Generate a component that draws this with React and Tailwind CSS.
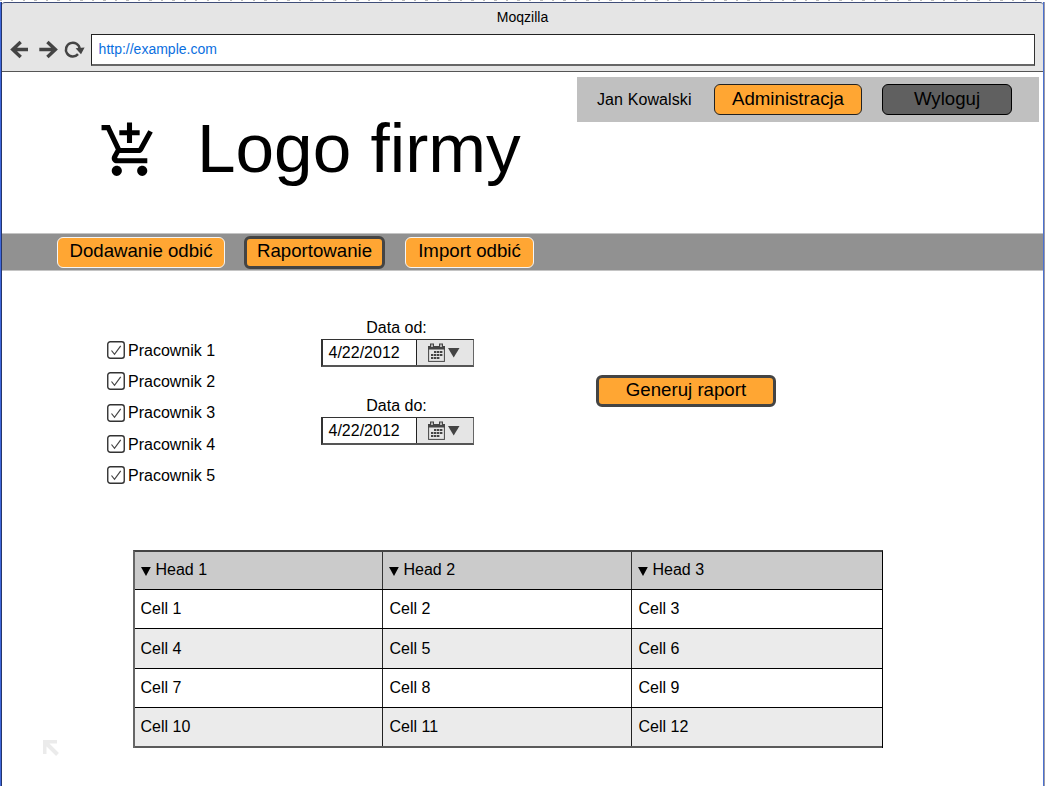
import React from "react";

const ROWS = [
  { cells: ["Cell 1", "Cell 2", "Cell 3"], style: "h-[39px] bg-white border-b border-black" },
  { cells: ["Cell 4", "Cell 5", "Cell 6"], style: "h-[40px] bg-[#ebebeb] border-b border-black" },
  { cells: ["Cell 7", "Cell 8", "Cell 9"], style: "h-[39px] bg-white border-b border-black" },
  { cells: ["Cell 10", "Cell 11", "Cell 12"], style: "h-[40px] bg-[#ebebeb] border-b-2 border-[#5a5a5a]" },
];

const WORKERS = [
  { name: "Pracownik 1", height: "h-[31px]" },
  { name: "Pracownik 2", height: "h-[31px]" },
  { name: "Pracownik 3", height: "h-[32px]" },
  { name: "Pracownik 4", height: "h-[31px]" },
  { name: "Pracownik 5", height: "h-[31px]" },
];

const COLUMNS = "grid grid-cols-[248px_249px_250px]";

function BrowserIcons() {
  return (
    <svg width="78" height="24" viewBox="0 0 78 24" fill="none" stroke="#444" strokeWidth="3.4">
      <path d="M20 11.5H5M12.7 4L4.7 11.5L12.7 19" />
      <path d="M31.3 11.5H47M39.4 4L47.4 11.5L39.4 19" />
      <path d="M70 16.2A6.9 6.9 0 1 1 71.7 11" strokeWidth="2.5" />
      <path d="M67.6 10.3L76.6 9.6L73 16.2Z" fill="#444" stroke="none" />
    </svg>
  );
}

function Browser() {
  return (
    <header className="flex h-[70px] flex-col rounded-t-[3px] border-b border-t border-b-[#555] border-t-[#3e4d78] bg-[#e5e5e5]">
      <div className="flex h-[31px] items-center justify-center text-[14px] leading-none">
        <span className="mt-[-3px]">Moqzilla</span>
      </div>
      <div className="flex items-center pl-[6px]">
        <BrowserIcons />
        <div className="ml-[5px] flex h-[32px] w-[944px] items-center border-2 border-b-[#666] border-l-[#222] border-r-[#333] border-t-[#222] bg-white pl-[6px] text-[14px] leading-none text-[#0b6fe0] [border-width:1px_1px_2px_1px]">
          <span className="ml-[0.6px] mt-[-1px]">http://example.com</span>
        </div>
      </div>
    </header>
  );
}

function Checkbox() {
  return (
    <svg className="mt-[-1px] shrink-0" width="18" height="18" viewBox="0 0 18 18" fill="none">
      <rect x="0.75" y="0.75" width="16.5" height="16.5" rx="2.5" fill="white" stroke="#333" strokeWidth="1.4" />
      <path d="M4.5 9.5L7.5 13.3L13.7 4.8" stroke="#444" strokeWidth="1.2" />
    </svg>
  );
}

function CalendarIcon() {
  return (
    <svg width="34" height="20" viewBox="0 0 34 20">
      <rect x="0.6" y="3.6" width="15.8" height="14.8" fill="none" stroke="#444" strokeWidth="1" />
      <path fill="#444" d="M0 3H2V0.5H6V3H11V0.5H15V3H17V6.5H0Z" />
      <path fill="#e5e5e5" d="M3.3 1.5h1.4v2.5H3.3zM12.3 1.5h1.4v2.5h-1.4z" />
      <path
        fill="#444"
        d="M6 8h2.4v2H6zM9 8h2.4v2H9zM12 8h2.4v2H12zM3 11h2.4v2H3zM6 11h2.4v2H6zM9 11h2.4v2H9zM12 11h2.4v2H12zM3 14h2.4v2H3zM6 14h2.4v2H6zM9 14h2.4v2H9z"
      />
      <path fill="#444" d="M20 5H31.5L25.7 14.5Z" />
    </svg>
  );
}

function DateField({ label }) {
  return (
    <div className="flex w-[153px] flex-col">
      <span className="h-[20px] pr-[2px] text-center text-[16px] leading-[18px]">{label}</span>
      <div className="flex h-[28px] border-b-[#555] border-l-[#333] border-r-[#666] border-t-[#333] [border-style:solid] [border-width:1px_1px_2px_2px]">
        <div className="flex w-[94px] items-center border-r border-[#222] pl-[5.5px] text-[16px] leading-none">
          <span>4/22/2012</span>
        </div>
        <div className="flex flex-1 items-center bg-[#e5e5e5] pl-[11px]">
          <CalendarIcon />
        </div>
      </div>
    </div>
  );
}

function Button({ children, className }) {
  return (
    <button className={`flex items-center justify-center whitespace-nowrap text-[18.66px] leading-none ${className}`}>
      <span className="mt-[-1px]">{children}</span>
    </button>
  );
}

function DataTable() {
  return (
    <div className="flex w-[750px] flex-col border-l-2 border-r border-t-2 border-l-[#666] border-r-black border-t-[#444] text-[16px] leading-none">
      <div className={`${COLUMNS} h-[38px] border-b border-black bg-[#cbcbcb]`}>
        {["Head 1", "Head 2", "Head 3"].map((head) => (
          <div key={head} className="flex items-center border-r-[1.5px] border-[#333] pl-[5.5px] last:border-r-0">
            <svg width="10" height="9" viewBox="0 0 10 9" className="mr-[5px] mt-[1px]">
              <path d="M0 0H9.8L5 9Z" />
            </svg>
            <span className="mt-[-2px]">{head}</span>
          </div>
        ))}
      </div>
      {ROWS.map(({ cells, style }) => (
        <div key={cells[0]} className={`${COLUMNS} ${style}`}>
          {cells.map((cell, index) => (
            <div key={cell} className={`flex items-center border-r border-[#222] last:border-r-0 ${index === 0 ? "pl-[5.5px]" : "pl-[6.5px]"}`}>
              {cell}
            </div>
          ))}
        </div>
      ))}
    </div>
  );
}

export default function App() {
  return (
    <div className="flex h-[786px] w-[1046px] flex-col overflow-hidden bg-white font-['Liberation_Sans',Arial,sans-serif] text-black">
      <div className="h-[2px] shrink-0 bg-[repeating-linear-gradient(90deg,#bbb_0_2px,#fff_2px_11.5px)] bg-[length:100%_1px] bg-no-repeat" />
      <div className="flex min-h-0 flex-1">
        <div className="w-[2px] border-l border-[#3f68dc] bg-[#26356a]" />
        <div className="flex w-[1041px] flex-col">
          <Browser />
          <div className="flex h-[161px] justify-between pr-[4px]">
            <div className="flex pl-[97px]">
              <svg className="mt-[47.5px]" width="61" height="61" viewBox="0 0 24 24" aria-hidden="true">
                <path d="M11 9h2V6h3V4h-3V1h-2v3H8v2h3v3zm-4 9c-1.1 0-1.99.9-1.99 2S5.9 22 7 22s2-.9 2-2-.9-2-2-2zm10 0c-1.1 0-1.99.9-1.99 2s.89 2 1.99 2 2-.9 2-2-.9-2-2-2zm-9.83-3.25l.03-.12.9-1.63h7.45c.75 0 1.41-.41 1.75-1.03l3.86-7.01L19.42 4h-.01l-1.1 2-2.76 5H8.53l-.13-.27L6.16 6l-.95-2-.94-2H1v2h2l3.6 7.59-1.35 2.45c-.16.28-.25.61-.25.96 0 1.1.9 2 2 2h12v-2H7.42c-.13 0-.25-.11-.25-.25z" />
              </svg>
              <h1 className="ml-[37px] mt-[36px] whitespace-nowrap text-[69.33px] leading-[80px]">Logo firmy</h1>
            </div>
            <div className="mt-[5px] flex h-[45px] w-[462px] items-center bg-[#c0c0c0] pl-[20px]">
              <span className="w-[117px] text-[16px] leading-none tracking-[0.1px]">Jan Kowalski</span>
              <Button className="h-[31px] w-[148px] rounded-[6px] border-[1.5px] border-[#222] bg-[#ffa633]">Administracja</Button>
              <Button className="ml-[20px] h-[31px] w-[130px] rounded-[6px] border-[1.5px] border-black bg-[#606060]">Wyloguj</Button>
            </div>
          </div>
          <nav className="flex h-[38px] items-center border-y border-[#c4c4c4] bg-[#919191] pl-[55px]">
            <Button className="h-[31px] w-[168px] rounded-[6px] border-[1.5px] border-[#f5f5f5] bg-[#ffa633]">Dodawanie odbić</Button>
            <Button className="ml-[19px] h-[33px] w-[141px] rounded-[6px] border-[3px] border-[#444] bg-[#ffa633]">Raportowanie</Button>
            <Button className="ml-[20px] h-[31px] w-[129px] rounded-[6px] border-[1.5px] border-[#f5f5f5] bg-[#ffa633]">Import odbić</Button>
          </nav>
          <main className="flex flex-col">
            <section className="flex h-[279px] items-start pl-[105px]">
              <div className="flex w-[214px] flex-col pt-[64px]">
                {WORKERS.map(({ name, height }) => (
                  <label key={name} className={`flex items-center text-[16px] leading-none ${height}`}>
                    <Checkbox />
                    <span className="ml-[3px]">{name}</span>
                  </label>
                ))}
              </div>
              <div className="flex flex-col gap-[30px] pt-[48px]">
                <DateField label="Data od:" />
                <DateField label="Data do:" />
              </div>
              <Button className="ml-[122px] mt-[104px] h-[32px] w-[180px] rounded-[6px] border-[3px] border-[#444] bg-[#ffa633]">Generuj raport</Button>
            </section>
            <div className="flex">
              <div className="flex w-[131px] items-end pl-[41px]">
                <svg className="mb-[-8px]" width="16" height="16" viewBox="0 0 16 16" fill="none" stroke="#ebebeb" strokeWidth="4">
                  <path d="M14 1.5H1.5V14M1.5 1.5L14.5 14.5" />
                </svg>
              </div>
              <DataTable />
            </div>
          </main>
        </div>
        <div className="w-[2px] border-l border-[#4a70cf] bg-[#9a9aa8]" />
      </div>
    </div>
  );
}
